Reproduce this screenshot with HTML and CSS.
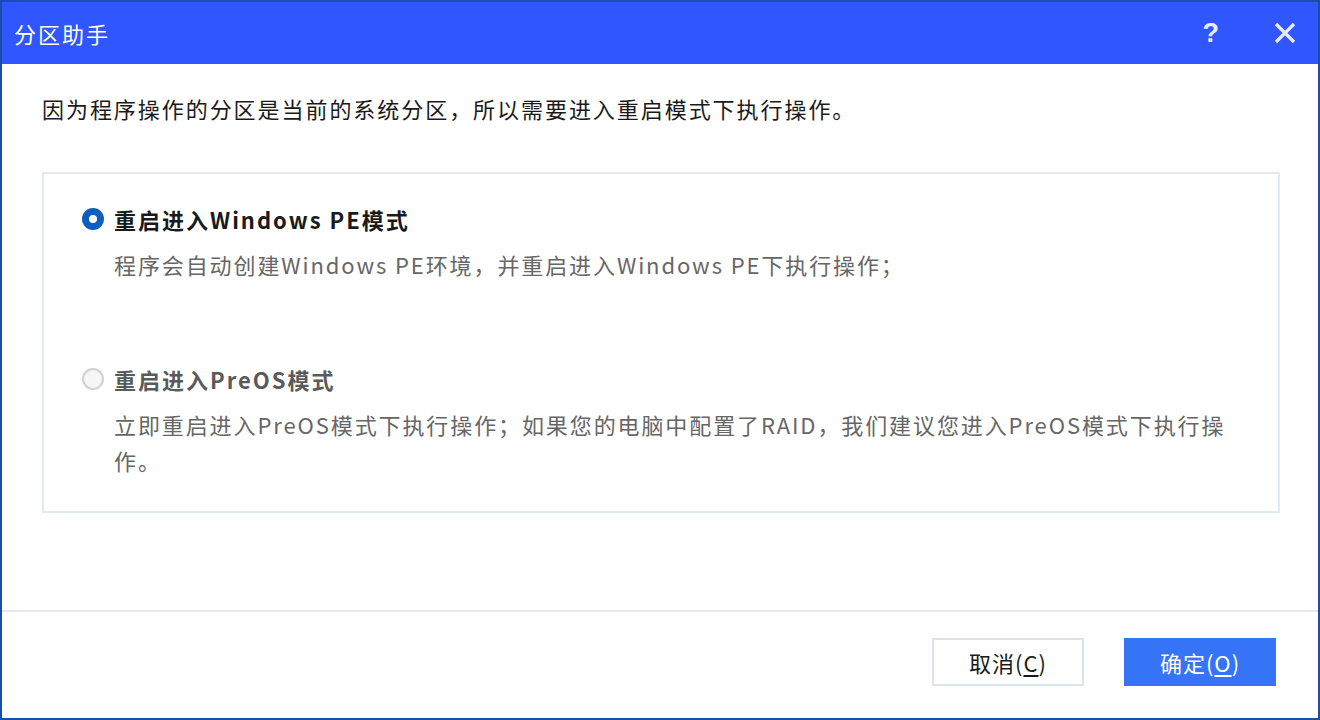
FILE: index.html
```html
<!DOCTYPE html>
<html lang="zh-CN">
<head>
<meta charset="utf-8">
<title>分区助手</title>
<link rel="stylesheet" href="styles.css">
</head>
<body>
<div class="dialog">
  <div class="titlebar">
    <div class="title">分区助手</div>
    <div class="tools">
      <span class="help">?</span>
      <svg class="close" width="22" height="22" viewBox="0 0 22 22"><path d="M2 2 L20 20 M20 2 L2 20" stroke="#e8ecff" stroke-width="3.2" fill="none"/></svg>
    </div>
  </div>
  <div class="content">
    <p class="intro">因为程序操作的分区是当前的系统分区，所以需要进入重启模式下执行操作。</p>
    <div class="panel">
      <div class="option">
        <div class="opt-head"><span class="radio checked"></span><span class="opt-title">重启进入Windows PE模式</span></div>
        <p class="opt-desc">程序会自动创建Windows PE环境，并重启进入Windows PE下执行操作；</p>
      </div>
      <div class="option second">
        <div class="opt-head"><span class="radio disabled"></span><span class="opt-title muted">重启进入PreOS模式</span></div>
        <p class="opt-desc">立即重启进入PreOS模式下执行操作；如果您的电脑中配置了RAID，我们建议您进入PreOS模式下执行操作。</p>
      </div>
    </div>
  </div>
  <div class="footer">
    <button class="btn cancel">取消(<u>C</u>)</button>
    <button class="btn ok">确定(<u>O</u>)</button>
  </div>
</div>
</body>
</html>
```
FILE: styles.css
```css
* { box-sizing: border-box; }
html, body { margin: 0; padding: 0; }
body {
  width: 1320px;
  height: 720px;
  font-family: "Noto Sans CJK SC", "Noto Sans", sans-serif;
  background: #ffffff;
}
.dialog {
  width: 1320px;
  height: 720px;
  border: 2px solid #1a4fa8;
  display: flex;
  flex-direction: column;
  background: #fff;
}
.titlebar {
  height: 62px;
  flex: none;
  background: #3056ff;
  display: flex;
  align-items: center;
  justify-content: space-between;
  padding: 0 22px 0 12px;
}
.title {
  color: #ffffff;
  font-size: 22px;
  line-height: 30px;
  letter-spacing: 2px;
}
.tools {
  display: flex;
  align-items: center;
  gap: 55px;
}
.help {
  color: #e8ecff;
  font-family: "Liberation Sans", sans-serif;
  font-weight: bold;
  font-size: 27px;
  line-height: 30px;
}
.close { display: block; }
.content {
  flex: 1;
  padding: 28px 38px 0 40px;
}
.intro {
  margin: 0;
  font-size: 22px;
  line-height: 32px;
  color: #1a1a1a;
  letter-spacing: 1.95px;
}
.panel {
  margin-top: 48px;
  height: 341px;
  border: 2px solid #e4e9f0;
  padding: 30px 30px 0 38px;
}
.option.second { margin-top: 82px; }
.opt-head {
  display: flex;
  align-items: center;
  height: 30px;
}
.radio {
  width: 22px;
  height: 22px;
  border-radius: 50%;
  margin-right: 10px;
  flex: none;
}
.radio.checked {
  background: #fff;
  border: 7px solid #0b5fc1;
}
.radio.disabled {
  background: #f6f6f6;
  border: 2px solid #d2d2d2;
}
.opt-title {
  font-size: 22px;
  font-weight: bold;
  color: #1a1a1a;
  line-height: 30px;
  letter-spacing: 2px;
}
.opt-title.muted { color: #5a5a5a; }
.opt-desc {
  margin: 12px 0 0 32px;
  font-size: 22px;
  line-height: 36px;
  color: #666666;
  letter-spacing: 1.9px;
}
.footer {
  flex: none;
  height: 108px;
  border-top: 2px solid #e4e9f0;
  display: flex;
  justify-content: flex-end;
  align-items: flex-start;
  gap: 40px;
  padding: 26px 42px 0 0;
}
.btn {
  width: 152px;
  height: 48px;
  font-family: "Noto Sans CJK SC", "Noto Sans", sans-serif;
  font-size: 22px;
  letter-spacing: 1px;
  padding: 0;
  cursor: pointer;
}
.btn.cancel {
  background: #fff;
  border: 2px solid #dde3ec;
  color: #1a1a1a;
}
.btn.ok {
  background: #3574f6;
  border: none;
  color: #ffffff;
}
.btn u { text-underline-offset: 3px; }
```
